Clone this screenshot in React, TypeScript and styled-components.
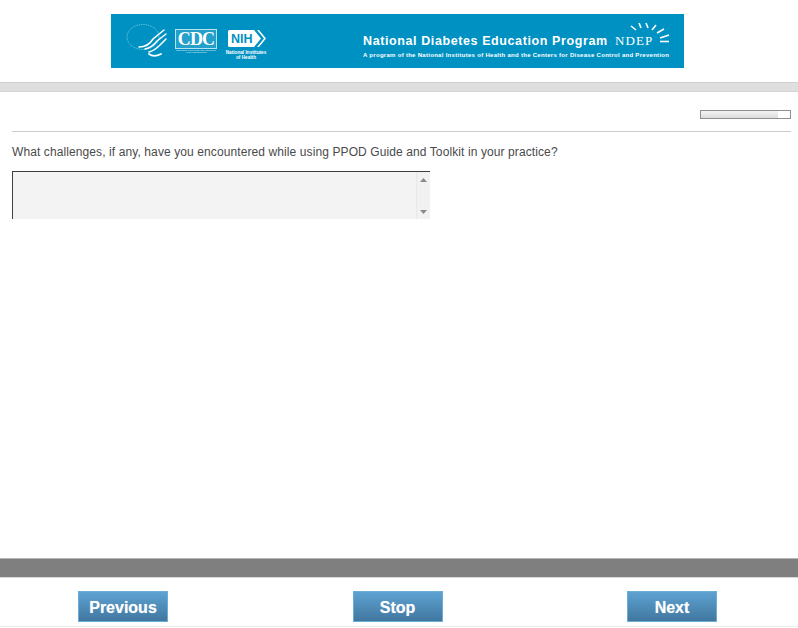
import React from 'react';
import styled, { createGlobalStyle } from 'styled-components';

const GlobalStyle = createGlobalStyle`
  html, body {
    margin: 0;
    padding: 0;
    background: #ffffff;
  }
  body {
    font-family: 'Liberation Sans', Arial, sans-serif;
    overflow: hidden;
  }
`;

const Page = styled.div`
  display: flex;
  flex-direction: column;
  width: 798px;
  height: 628px;
  overflow: hidden;
`;

const Header = styled.header`
  display: flex;
  justify-content: center;
  padding: 14px 3px 14px 0;
`;

const Banner = styled.div`
  display: flex;
  align-items: flex-start;
  box-sizing: border-box;
  width: 573px;
  height: 54px;
  padding: 10px 0 0 15px;
  background: #0091c3;
  color: #ffffff;
`;

const Seal = styled.svg`
  flex-shrink: 0;
  width: 42px;
  height: 33px;
`;

const CdcLogo = styled.div`
  flex-shrink: 0;
  width: 42px;
  margin: 5px 0 0 7px;
`;

const CdcBox = styled.div`
  display: flex;
  align-items: center;
  justify-content: center;
  box-sizing: border-box;
  height: 20px;
  border: 1px solid #b9e2f0;
  background: rgba(255, 255, 255, 0.14);
  font-family: 'Liberation Serif', serif;
  font-weight: bold;
  font-size: 18px;
  letter-spacing: -0.9px;
  line-height: 1;
`;

const CdcCaption = styled.div`
  margin-top: 0.5px;
  font-size: 2.4px;
  line-height: 2.2px;
  text-align: center;
  opacity: 0.85;
`;

const NihLogo = styled.div`
  flex-shrink: 0;
  width: 44px;
  margin: 6px 0 0 7px;
  text-align: center;
`;

const NihMark = styled.svg`
  display: block;
  width: 38px;
  height: 17px;
  margin-left: 4px;
`;

const NihCaption = styled.div`
  margin-top: 4px;
  font-size: 4.7px;
  font-weight: bold;
  line-height: 4.6px;
  white-space: nowrap;
`;

const ProgramInfo = styled.div`
  flex-shrink: 0;
  margin-left: 95px;
  margin-top: 10px;
  white-space: nowrap;
`;

const TitleRow = styled.div`
  display: flex;
  align-items: center;
`;

const ProgramTitle = styled.div`
  width: 252px;
  font-weight: bold;
  font-size: 12.5px;
  line-height: 14px;
  letter-spacing: 0.6px;
`;

const NdepLogo = styled.div`
  position: relative;
  font-family: 'Liberation Serif', serif;
  font-size: 13px;
  line-height: 14px;
  letter-spacing: 1.1px;
`;

const NdepRays = styled.svg`
  position: absolute;
  left: 0;
  top: -14px;
  width: 58px;
  height: 26px;
`;

const ProgramNote = styled.div`
  margin-top: 4px;
  font-weight: bold;
  font-size: 6px;
  line-height: 7px;
  letter-spacing: 0.29px;
`;

const GreyBand = styled.div`
  flex-shrink: 0;
  box-sizing: border-box;
  height: 10px;
  border-top: 1px solid #cfcfcf;
  border-bottom: 1px solid #d4d4d4;
  background: #dfdfdf;
`;

const Content = styled.main`
  flex: 1;
  display: flex;
  flex-direction: column;
  padding: 18px 7px 0 12px;
`;

const ProgressRow = styled.div`
  display: flex;
  justify-content: flex-end;
  padding-bottom: 12px;
  border-bottom: 1px solid #cccccc;
`;

const ProgressTrack = styled.div`
  box-sizing: border-box;
  width: 91px;
  height: 9px;
  border: 1px solid #8f8f8f;
  background: #ffffff;
`;

const ProgressFill = styled.div`
  height: 100%;
  background: linear-gradient(to bottom, #f3f3f3, #dcdcdc);
`;

const Question = styled.p`
  margin: 13px 0 0;
  font-size: 12px;
  line-height: 14px;
  letter-spacing: 0.1px;
  color: #4a4a4a;
`;

const AnswerBox = styled.div`
  display: flex;
  justify-content: flex-end;
  box-sizing: border-box;
  width: 418px;
  height: 48px;
  margin-top: 12px;
  border-top: 1px solid #3f3f3f;
  border-left: 1px solid #3f3f3f;
  background: #f3f3f3;
`;

const ScrollBar = styled.div`
  display: flex;
  flex-direction: column;
  justify-content: space-between;
  align-items: center;
  box-sizing: border-box;
  width: 14px;
  padding: 6px 0 5px;
  border-left: 1px solid #e8e8e8;
  background: #f1f1f1;
`;

const ScrollArrow = styled.svg<{ $down?: boolean }>`
  display: block;
  width: 7px;
  height: 4px;
  transform: ${(p) => (p.$down ? 'rotate(180deg)' : 'none')};
`;

const BottomBand = styled.div`
  flex-shrink: 0;
  box-sizing: border-box;
  height: 20px;
  border-top: 1px solid #b5b5b5;
  border-bottom: 1px solid #d8d8d8;
  background: #7f7f7f;
`;

const Footer = styled.footer`
  flex-shrink: 0;
  display: flex;
  justify-content: space-between;
  box-sizing: border-box;
  height: 49px;
  padding: 13px 81px 4px 78px;
  border-bottom: 1px solid #ececec;
  margin-bottom: 1px;
`;

const NavButton = styled.button`
  box-sizing: border-box;
  width: 90px;
  height: 31px;
  padding: 2px 0 0;
  border: 1px solid #6aaed6;
  background: linear-gradient(to bottom, #5da2d2, #41779f);
  color: #ffffff;
  font-family: 'Liberation Sans', Arial, sans-serif;
  font-weight: bold;
  font-size: 16px;
  text-shadow: 0 0 1px rgba(255, 255, 255, 0.5);
`;

// sunburst strokes of the NDEP mark, x1 y1 x2 y2
const rays = [
  [16, 6, 21, 10],
  [24, 3, 26, 8],
  [31, 3, 33, 8],
  [41, 5, 37, 10],
  [49, 9, 42, 13],
  [54, 15, 45, 18],
  [54, 21.5, 45, 21.5],
];

const App: React.FC = () => {
  return (
    <Page>
      <GlobalStyle />
      <Header>
        <Banner>
          <Seal viewBox="0 0 42 33">
            <ellipse cx="17" cy="13" rx="16" ry="12.5" fill="none" stroke="#a8dcee" strokeWidth="0.7" strokeDasharray="1 0.8" />
            <g fill="none" stroke="#ffffff" strokeLinecap="round" strokeWidth="1.5">
              <path d="M13 23c7 0 11-3 14-8l11-9" />
              <path d="M19 25c6-1 9-4 12-8l9-7" />
              <path d="M23 28c5-1 8-4 11-7l6-6" />
              <path d="M23 30c4 3 8 2 12 0" strokeWidth="1.8" />
            </g>
          </Seal>
          <CdcLogo>
            <CdcBox>CDC</CdcBox>
            <CdcCaption>CENTERS FOR DISEASE CONTROL AND PREVENTION</CdcCaption>
          </CdcLogo>
          <NihLogo>
            <NihMark viewBox="0 0 38 17">
              <path d="M1.5 0H26l7 8.5-7 8.5H1.5A1.5 1.5 0 0 1 0 15.5v-14A1.5 1.5 0 0 1 1.5 0z" fill="#ffffff" />
              <path d="M29 0h2l7 8.5-7 8.5h-2l7-8.5z" fill="#ffffff" />
              <text x="3" y="13" fontFamily="Liberation Sans, sans-serif" fontWeight="bold" fontSize="12.5" fill="#0091c3">
                NIH
              </text>
            </NihMark>
            <NihCaption>
              National Institutes
              <br />
              of Health
            </NihCaption>
          </NihLogo>
          <ProgramInfo>
            <TitleRow>
              <ProgramTitle>National Diabetes Education Program</ProgramTitle>
              <NdepLogo>
                NDEP
                <NdepRays viewBox="0 0 58 26">
                  {rays.map((r, i) => (
                    <line key={i} x1={r[0]} y1={r[1]} x2={r[2]} y2={r[3]} stroke="#ffffff" strokeWidth="1.6" />
                  ))}
                </NdepRays>
              </NdepLogo>
            </TitleRow>
            <ProgramNote>
              A program of the National Institutes of Health and the Centers for Disease Control and Prevention
            </ProgramNote>
          </ProgramInfo>
        </Banner>
      </Header>
      <GreyBand />
      <Content>
        <ProgressRow>
          <ProgressTrack>
            <ProgressFill style={{ width: '86%' }} />
          </ProgressTrack>
        </ProgressRow>
        <Question>What challenges, if any, have you encountered while using PPOD Guide and Toolkit in your practice?</Question>
        <AnswerBox>
          <ScrollBar>
            <ScrollArrow viewBox="0 0 7 4">
              <path d="M3.5 0L7 4H0z" fill="#8a8a8a" />
            </ScrollArrow>
            <ScrollArrow viewBox="0 0 7 4" $down>
              <path d="M3.5 0L7 4H0z" fill="#8a8a8a" />
            </ScrollArrow>
          </ScrollBar>
        </AnswerBox>
      </Content>
      <BottomBand />
      <Footer>
        <NavButton>Previous</NavButton>
        <NavButton>Stop</NavButton>
        <NavButton>Next</NavButton>
      </Footer>
    </Page>
  );
};

export default App;
